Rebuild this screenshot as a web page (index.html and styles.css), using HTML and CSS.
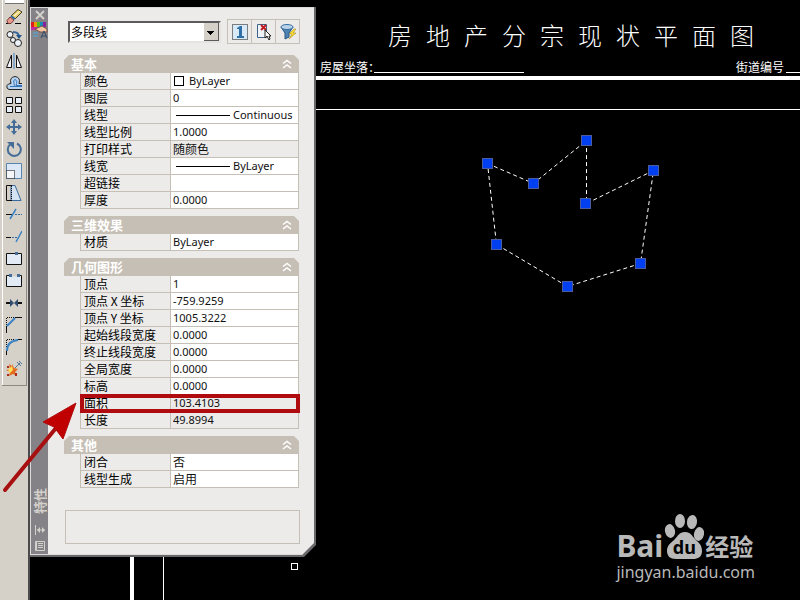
FILE: index.html
```html
<!DOCTYPE html>
<html lang="zh-CN">
<head>
  <meta charset="UTF-8" />
  <meta name="viewport" content="width=device-width, initial-scale=1" />
  <title>房地产分宗现状平面图</title>
  <link rel="stylesheet" href="styles.css">
</head>
<body>
  <nav class="toolbar">
    <div class="tools">
      <button type="button" aria-label="删除"><svg viewBox="0 0 16 16"><path d="M0 14.500h4M9 14.500h6" stroke="#000"/><path d="M5 7l7-6.500 4 2.500-7 7z" fill="#efd36a" stroke="#443c22"/><path d="M8 7l6-5" stroke="#fff"/><path d="M1 11.500l3-3.500 4 3-3 3.500H2z" fill="#e99b90" stroke="#753c35"/><path d="M5 7l4 3" stroke="#39699c" stroke-width="2"/></svg></button>
      <button type="button" aria-label="复制"><svg viewBox="0 0 16 16"><g fill="#eef4fa" stroke="#222"><circle cx="4" cy="3.500" r="3"/><circle cx="7" cy="9" r="2.500"/><circle cx="12" cy="12" r="3.500"/></g><path d="M7 1q6 0 6 5" fill="none" stroke="#39699c" stroke-width="2"/><path d="M10 4h6l-3 4z" fill="#24568d"/></svg></button>
      <button type="button" aria-label="镜像"><svg viewBox="0 0 16 16"><path d="M5.500 2v12.500H.5zM10.500 2v12.500h5z" fill="#f2f6fa" stroke="#111"/><path d="M8 0v16" stroke="#3983c5" stroke-width="1"/></svg></button>
      <button type="button" aria-label="偏移"><svg viewBox="0 0 16 16"><path d="M16 14.500H3q-3-1-2-4 1-2 4-2-2-6 4-7 6 1 4 7h3" fill="#b9d4ef" stroke="#222"/><path d="M16 11.500H4h4q1-1 0-3-1-4 1-4 3 1 1 6h6" fill="none" stroke="#3475b8"/></svg></button>
      <button type="button" aria-label="阵列"><svg viewBox="0 0 16 16"><path d="M.5.5h6v6h-6zM9.500.5h6v6h-6zM.5 9.500h6v6h-6zM9.500 9.500h6v6h-6z" fill="#e9f0f8" stroke="#111"/></svg></button>
      <button type="button" aria-label="移动"><svg viewBox="0 0 16 16"><path d="M8 0l3 4H9v3h3V5l4 3-4 3V9H9v3h2l-3 4-3-4h2V9H4v2L0 8l4-3v2h3V4H5z" fill="#456d98"/></svg></button>
      <button type="button" aria-label="旋转"><svg viewBox="0 0 16 16"><path d="M4 3.500a6.500 6.500 0 1 0 7-1" fill="none" stroke="#456d98" stroke-width="2"/><path d="M1 1h7v7z" fill="#456d98"/></svg></button>
      <button type="button" aria-label="缩放"><svg viewBox="0 0 16 16"><path d="M.5.5h15v15H.5z" fill="#dce8f5" stroke="#5884ad"/><path d="M.5 7.500h8v8h-8z" fill="#f4f6fa" stroke="#000" stroke-dasharray="1 1"/></svg></button>
      <button type="button" aria-label="拉伸"><svg viewBox="0 0 16 16"><path d="M5 .5h4l6 15H5z" fill="#d4e3f3" stroke="#39699c"/><path d="M6 .5H.5v15H6" fill="none" stroke="#111"/><path d="M5.500 1v14" stroke="#111" stroke-dasharray="1 1"/></svg></button>
      <button type="button" aria-label="修剪"><svg viewBox="0 0 16 16"><path d="M0 7.500h6" stroke="#111"/><path d="M9 7.500h7" stroke="#39699c" stroke-dasharray="2 1"/><path d="M4 12l6-10" stroke="#3983c5" stroke-width="1.500"/></svg></button>
      <button type="button" aria-label="延伸"><svg viewBox="0 0 16 16"><path d="M0 8.500h5" stroke="#111"/><path d="M6 8.500h6" stroke="#39699c" stroke-dasharray="2 1"/><path d="M10 13l6-11" stroke="#3983c5" stroke-width="1.500"/></svg></button>
      <button type="button" aria-label="打断于点"><svg viewBox="0 0 16 16"><path d="M.5 2.500h15v11H.5z" fill="#e2ebf5" stroke="#111"/><path d="M9 1h3v3H9z" fill="#456d98"/></svg></button>
      <button type="button" aria-label="打断"><svg viewBox="0 0 16 16"><path d="M.5 2.500h15v11H.5z" fill="#e2ebf5" stroke="#111"/><path d="M5 2.500h6" stroke="#d5d0c8" stroke-width="2"/><path d="M3 1h3v3H3zM11 1h3v3h-3z" fill="#456d98"/></svg></button>
      <button type="button" aria-label="合并"><svg viewBox="0 0 16 16"><path d="M0 8h4M12 8h4" stroke="#111" stroke-width="2"/><path d="M4 4l4 4-4 4zM12 4L8 8l4 4z" fill="#304e70"/></svg></button>
      <button type="button" aria-label="倒角"><svg viewBox="0 0 16 16"><path d="M.5 16V9M9 .5h7" stroke="#111"/><path d="M.5 8V.5H8" fill="none" stroke="#111" stroke-dasharray="1 1"/><path d="M1 9l8-8" stroke="#3983c5" stroke-width="2"/></svg></button>
      <button type="button" aria-label="圆角"><svg viewBox="0 0 16 16"><path d="M.5 16v-5M11 .5h5" stroke="#111"/><path d="M.5 8V.5H8" fill="none" stroke="#111" stroke-dasharray="1 1"/><path d="M1 12Q1 2 12 1" fill="none" stroke="#3983c5" stroke-width="2"/></svg></button>
      <button type="button" aria-label="分解"><svg viewBox="0 0 16 16"><path d="M9 7l5-5M11 1l4 4M13 0l3 3" stroke="#54789b"/><path d="M6 3l2 4 4 1-3 3 2 4-4-2-4 2 1-4-4-2 4-1-1-5 3 2z" fill="#e46b20"/><path d="M6 5l1 4-3 3-2-3z" fill="#ffe05b"/><path d="M1 5h2v2H1zM1 13h2v2H1zM9 12h2v3H9z" fill="#a82b1c"/></svg></button>
    </div>
  </nav>

  <main class="workspace">
    <section class="sheet">
      <header class="sheet-head">
        <h1><span>房</span><span>地</span><span>产</span><span>分</span><span>宗</span><span>现</span><span>状</span><span>平</span><span>面</span><span>图</span></h1>
        <div class="sheet-info">
          <span>房屋坐落：</span><i class="blank"></i>
          <span class="street">街道编号</span><i class="blank short"></i>
        </div>
      </header>
      <div class="frame"><div class="frame-inner"></div></div>
    </section>

    <svg class="parcel" viewBox="0 0 180 160" role="img" aria-label="多段线">
      <path d="M7.500 31.500l46 20 53-43v63l67-33-13 93-73 23-71-42z" fill="none" stroke="#fff" stroke-dasharray="4 3"/>
      <g fill="#0040f0" stroke="#4c5c9c">
        <rect x="2.500" y="26.500" width="10" height="10"/>
        <rect x="48.500" y="46.500" width="10" height="10"/>
        <rect x="101.500" y="3.500" width="10" height="10"/>
        <rect x="100.500" y="66.500" width="10" height="10"/>
        <rect x="168.500" y="33.500" width="10" height="10"/>
        <rect x="155.500" y="126.500" width="10" height="10"/>
        <rect x="82.500" y="149.500" width="10" height="10"/>
        <rect x="11.500" y="107.500" width="10" height="10"/>
      </g>
    </svg>
    <div class="pickbox"></div>

    <aside class="palette">
      <div class="palette-body">
        <div class="strip">
          <button type="button" aria-label="关闭"><svg width="10" height="10" viewBox="0 0 10 10"><path d="M1 1l8 8M9 1L1 9" stroke="#d4d0cb" stroke-width="2"/></svg></button>
          <svg width="17" height="17" viewBox="0 0 17 17"><path d="M0 0h3v5H0z" fill="#d82020"/><path d="M3 0h3v5H3z" fill="#ef9b00"/><path d="M6 0h3v5H6z" fill="#51bd25"/><path d="M9 0h3v5H9z" fill="#168bb7"/><path d="M12 0h3v5h-3z" fill="#8a22a0"/><path d="M0 5h8v3H0z" fill="#c229a1"/><path d="M4 7l7-3 5 3v3H9z" fill="#f3c6a2" stroke="#765348"/><path d="M2 11h5M2 14h5" stroke="#6796b7" stroke-width="2"/><path d="M10 16l3-7 3 7M11 14h4" stroke="#334b67" fill="none"/></svg>
          <span class="strip-title">特性</span>
          <button type="button" aria-label="自动隐藏"><svg width="10" height="12" viewBox="0 0 10 12"><path d="M.5 1v10M2 6h8" stroke="#d4d0cb"/><path d="M2 6l3-3v6zM10 6L7 3v6z" fill="#d4d0cb"/></svg></button>
          <button type="button" aria-label="菜单"><svg width="10" height="10" viewBox="0 0 10 10"><path d="M.5.5h9v9h-9zM3 2.500h5M3 4.500h5M3 6.500h5M1.500 1v8" fill="none" stroke="#d4d0cb"/></svg></button>
        </div>

        <form class="props">
          <div class="picker">
            <select aria-label="对象类型"><option>多段线</option></select>
            <div class="picker-buttons">
              <button type="button" aria-label="切换 PICKADD"><svg viewBox="0 0 16 16"><path d="M.5.5h15v15H.5z" fill="#d8eaf7" stroke="#111" stroke-dasharray="1 1"/><path d="M5 4l3-2h2v10h2v2H5v-2h2V5H5z" fill="#2f70a9"/></svg></button>
              <button type="button" aria-label="选择对象"><svg viewBox="0 0 16 16"><path d="M1.500.5h9v13h-9z" fill="#eef3f9" stroke="#3f6387"/><path d="M5 1l5 5M10 1L5 6" stroke="#c21820" stroke-width="2"/><path d="M9 6v8l2-2 2 4 1-1-1-3h2z" fill="#fff" stroke="#222"/></svg></button>
              <button type="button" aria-label="快速选择"><svg viewBox="0 0 16 16"><path d="M1 3l4 6v6l4-2V9l4-6z" fill="#4d83b2" stroke="#285783"/><ellipse cx="7" cy="3" rx="6" ry="2.500" fill="#b7d2e9" stroke="#396d9d"/><path d="M14 5l-5 5h3l-3 5 7-6h-3l3-4z" fill="#ffe12e" stroke="#987b19" stroke-width=".5"/></svg></button>
            </div>
          </div>

          <section class="group">
            <h2>基本<button type="button" aria-label="折叠基本"><svg viewBox="0 0 10 10"><path d="M1 4.500l4-3 4 3M1 9l4-3 4 3"/></svg></button></h2>
            <table>
              <tr><th><label for="color">颜色</label></th><td><div class="cell"><i class="swatch"></i><input id="color" value="ByLayer"></div></td></tr>
              <tr><th><label for="layer">图层</label></th><td><input id="layer" value="0"></td></tr>
              <tr><th><label for="linetype">线型</label></th><td><div class="cell"><i class="line"></i><input id="linetype" value="Continuous"></div></td></tr>
              <tr><th><label for="scale">线型比例</label></th><td><input id="scale" value="1.0000"></td></tr>
              <tr class="locked"><th><label for="plot">打印样式</label></th><td><input id="plot" class="zh" value="随颜色" readonly></td></tr>
              <tr><th><label for="weight">线宽</label></th><td><div class="cell"><i class="line"></i><input id="weight" value="ByLayer"></div></td></tr>
              <tr><th><label for="link">超链接</label></th><td><input id="link" value=""></td></tr>
              <tr><th><label for="thickness">厚度</label></th><td><input id="thickness" value="0.0000"></td></tr>
            </table>
          </section>

          <section class="group">
            <h2>三维效果<button type="button" aria-label="折叠三维效果"><svg viewBox="0 0 10 10"><path d="M1 4.500l4-3 4 3M1 9l4-3 4 3"/></svg></button></h2>
            <table>
              <tr><th><label for="material">材质</label></th><td><input id="material" value="ByLayer"></td></tr>
            </table>
          </section>

          <section class="group">
            <h2>几何图形<button type="button" aria-label="折叠几何图形"><svg viewBox="0 0 10 10"><path d="M1 4.500l4-3 4 3M1 9l4-3 4 3"/></svg></button></h2>
            <table>
              <tr><th><label for="vertex">顶点</label></th><td><input id="vertex" value="1"></td></tr>
              <tr><th><label for="vx">顶点 X 坐标</label></th><td><input id="vx" value="-759.9259"></td></tr>
              <tr><th><label for="vy">顶点 Y 坐标</label></th><td><input id="vy" value="1005.3222"></td></tr>
              <tr><th><label for="startw">起始线段宽度</label></th><td><input id="startw" value="0.0000"></td></tr>
              <tr><th><label for="endw">终止线段宽度</label></th><td><input id="endw" value="0.0000"></td></tr>
              <tr><th><label for="globalw">全局宽度</label></th><td><input id="globalw" value="0.0000"></td></tr>
              <tr><th><label for="elevation">标高</label></th><td><input id="elevation" value="0.0000"></td></tr>
              <tr class="locked marked"><th><label for="area">面积</label></th><td><input id="area" value="103.4103" readonly></td></tr>
              <tr class="locked"><th><label for="length">长度</label></th><td><input id="length" value="49.8994" readonly></td></tr>
            </table>
          </section>

          <section class="group">
            <h2>其他<button type="button" aria-label="折叠其他"><svg viewBox="0 0 10 10"><path d="M1 4.500l4-3 4 3M1 9l4-3 4 3"/></svg></button></h2>
            <table>
              <tr><th><label for="closed">闭合</label></th><td><input id="closed" class="zh" value="否"></td></tr>
              <tr><th><label for="ltgen">线型生成</label></th><td><input id="ltgen" class="zh" value="启用"></td></tr>
            </table>
          </section>

          <div class="hint"></div>
        </form>
      </div>
    </aside>

    <div class="watermark">
      <div class="brand">
        <span class="bai">Bai</span>
        <span class="paw">
          <svg viewBox="0 0 40 46"><g fill="#b9b9b9"><ellipse cx="6" cy="17" rx="5" ry="7" transform="rotate(-12 6 17)"/><ellipse cx="16" cy="7" rx="5" ry="7"/><ellipse cx="28" cy="8" rx="5" ry="7" transform="rotate(8 28 8)"/><ellipse cx="35" cy="20" rx="5" ry="7" transform="rotate(12 35 20)"/><path d="M21 18c6 0 7 4 10 7 4 4 7 6 7 12 0 6-4 8-9 8H12c-6 0-9-3-9-8 0-6 4-8 8-12 3-3 4-7 10-7z"/></g></svg>
          <b>du</b>
        </span>
        <span class="jy">经验</span>
      </div>
      <div class="site">jingyan.baidu.com</div>
    </div>
  </main>

  <svg class="arrow" viewBox="0 0 80 96" aria-hidden="true"><path d="M5 90l51-62" stroke="#a80f10" stroke-width="4" stroke-linecap="round"/><path d="M76 3L43 22l11 5 9 12z" fill="#c00000" stroke="#b00a0a" stroke-linejoin="round"/></svg>
</body>
</html>
```
FILE: styles.css
```css
* {
  box-sizing: border-box;
}
body {
  margin: 0;
  min-height: 100vh;
  display: flex;
  position: relative;
  overflow: hidden;
  background: #000;
  color: #000;
  font: 12px/16px "Noto Sans CJK SC", sans-serif;
}
button {
  padding: 0;
  border: none;
  background: none;
}
svg {
  display: block;
}

/* modify toolbar */
.toolbar {
  flex: none;
  width: 30px;
  padding-left: 2px;
  background: #d5d0c8;
  border-right: 2px solid #4b494b;
}
.tools {
  width: 25px;
  padding: 2px 0 5px;
  border: solid #8c8882;
  border-width: 0 1px 1px 0;
  box-shadow: inset 1px 0 #fff;
}
.tools::before {
  content: "";
  display: block;
  height: 3px;
  margin: -2px 2px 2px 3px;
  background: #fff;
  border-bottom: 1px solid #77736e;
}
.tools button {
  display: grid;
  place-items: center;
  width: 24px;
  height: 22px;
}
.tools svg,
.picker-buttons svg {
  width: 16px;
  height: 16px;
}

/* drawing sheet */
.workspace {
  flex: 1;
  position: relative;
  display: flex;
}
.sheet {
  flex: 1;
  display: flex;
  flex-direction: column;
  margin-left: 100px;
  color: #fff;
}
.sheet-head {
  height: 76px;
  padding: 17px 0 0 190px;
}
.sheet-head h1 {
  display: flex;
  justify-content: center;
  gap: 14px;
  margin: 0 0 0 22px;
  font-size: 24px;
  line-height: 36px;
  font-weight: 300;
}
.sheet-info {
  display: flex;
  align-items: flex-end;
  padding-top: 6px;
}
.blank {
  width: 150px;
  border-bottom: 1px solid #fff;
  margin-bottom: 2px;
  margin-left: -6px;
}
.street {
  margin-left: auto;
}
.blank.short {
  width: 14px;
  margin-left: 2px;
}
.frame {
  flex: 1;
  display: flex;
  padding: 29px 0 0 29px;
  border: solid #fff;
  border-width: 4px 0 0 4px;
}
.frame-inner {
  flex: 1;
  border: solid #fff;
  border-width: 1px 0 0 1px;
}
.parcel {
  position: absolute;
  left: 450px;
  top: 132px;
  width: 180px;
  height: 160px;
}
.pickbox {
  position: absolute;
  left: 261px;
  top: 563px;
  width: 7px;
  height: 7px;
  border: 1px solid #fff;
}

/* floating properties window */
.palette {
  position: absolute;
  left: 0;
  top: 7px;
  width: 286px;
  padding: 0 2px 2px 0;
  background: #68676a;
  clip-path: polygon(0 0, 100% 0, 100% calc(100% - 12px), calc(100% - 12px) 100%, 0 100%);
}
.palette-body {
  display: flex;
  background: #ecebe9;
  border: solid #dddbd8;
  border-width: 1px 0 1px 1px;
  clip-path: polygon(0 0, 100% 0, 100% calc(100% - 12px), calc(100% - 12px) 100%, 0 100%);
}
.strip {
  flex: none;
  width: 17px;
  display: flex;
  flex-direction: column;
  align-items: center;
  gap: 4px;
  padding: 1px 0 2px;
  background: #848286;
}
.strip button {
  height: 12px;
}
.strip > svg {
  margin-top: -3px;
}
.strip-title {
  margin: auto 0 6px;
  writing-mode: vertical-rl;
  text-orientation: sideways;
  transform: rotate(180deg);
  font-size: 13px;
  font-weight: 700;
  color: #d4d0cb;
}
.props {
  flex: 1;
  padding: 11px 15px 10px 16px;
}
.picker {
  display: flex;
  justify-content: space-between;
  align-items: center;
  margin: 0 -1px 11px 4px;
}
.picker select {
  appearance: none;
  width: 153px;
  height: 22px;
  padding: 0 20px 0 1px;
  border: 2px solid;
  border-color: #5c5a5c #e6e3df #e6e3df #5c5a5c;
  border-radius: 0;
  background:
    linear-gradient(#000, #000) 137px 8px / 7px 1px no-repeat,
    linear-gradient(#000, #000) 138px 9px / 5px 1px no-repeat,
    linear-gradient(#000, #000) 139px 10px / 3px 1px no-repeat,
    linear-gradient(#000, #000) 140px 11px / 1px 1px no-repeat,
    linear-gradient(#5c5a5c, #5c5a5c) right / 1px 100% no-repeat,
    linear-gradient(#5c5a5c, #5c5a5c) right bottom / 15px 1px no-repeat,
    linear-gradient(#d5d0c8, #d5d0c8) right / 15px 100% no-repeat,
    #fff;
  font: 12px/18px "Noto Sans CJK SC", sans-serif;
  color: #000;
}
.picker-buttons {
  display: flex;
  border: 1px solid #c6bfb5;
}
.picker-buttons button {
  display: grid;
  place-items: center;
  width: 23px;
  height: 23px;
}
.picker-buttons button + button {
  width: 24px;
  border-left: 1px solid #c6bfb5;
}
.group {
  margin-bottom: 7px;
}
.group h2 {
  display: flex;
  justify-content: space-between;
  align-items: center;
  height: 18px;
  margin: 0;
  padding: 0 7px;
  background: #c6bfb5;
  clip-path: polygon(0 5px, 5px 0, calc(100% - 5px) 0, 100% 5px, 100% 100%, 0 100%);
  font-size: 13px;
  line-height: 16px;
  color: #fff;
}
.group h2 svg {
  width: 10px;
  height: 10px;
  fill: none;
  stroke: #fff;
  stroke-width: 1.5;
}
.group table {
  width: calc(100% - 16px);
  margin-left: 16px;
  border-spacing: 0;
  table-layout: fixed;
  border-left: 1px solid #c6bfb5;
}
.group th,
.group td {
  height: 17px;
  padding: 0;
  border: solid #c6bfb5;
  border-width: 0 1px 1px 0;
  line-height: 16px;
}
.group th {
  width: 90px;
  padding-left: 3px;
  text-align: left;
  font-weight: 400;
  white-space: nowrap;
}
.group label {
  display: block;
  height: 16px;
}
.group td {
  background: #fff;
}
.group .locked td {
  background: #ecebe9;
}
.group input {
  display: block;
  width: 100%;
  min-width: 0;
  height: 16px;
  padding: 0 2px;
  border: none;
  background: none;
  font: 11px/16px "Noto Sans", "Noto Sans CJK SC", sans-serif;
  color: #111;
}
.group .zh {
  font: 12px/16px "Noto Sans CJK SC", sans-serif;
}
.cell {
  display: flex;
  align-items: center;
  padding-left: 3px;
}
.swatch {
  flex: none;
  width: 10px;
  height: 10px;
  margin-right: 3px;
  border: 1px solid #000;
}
.line {
  flex: none;
  width: 54px;
  margin: 0 1px 0 2px;
  border-top: 1px solid #000;
}
.marked {
  outline: 4px solid #b00c10;
  outline-offset: -3px;
}
.hint {
  height: 34px;
  margin: 22px -1px 0 1px;
  border: 1px solid #c6bfb5;
}
.arrow {
  position: absolute;
  left: 0;
  top: 400px;
  width: 80px;
  height: 96px;
}

/* site mark */
.watermark {
  position: absolute;
  right: 45px;
  bottom: 16px;
  color: #b9b9b9;
}
.brand {
  display: flex;
  align-items: flex-end;
  gap: 1px;
}
.bai {
  font: 700 30px/28px "Noto Sans", sans-serif;
}
.paw {
  position: relative;
  width: 40px;
}
.paw b {
  position: absolute;
  left: 0;
  right: 0;
  bottom: 3px;
  text-align: center;
  font: 700 18px/20px "Noto Sans", sans-serif;
  color: #000;
}
.jy {
  font-size: 24px;
  line-height: 28px;
  font-weight: 700;
}
.site {
  font: 16px/24px "Noto Sans", sans-serif;
}
```
